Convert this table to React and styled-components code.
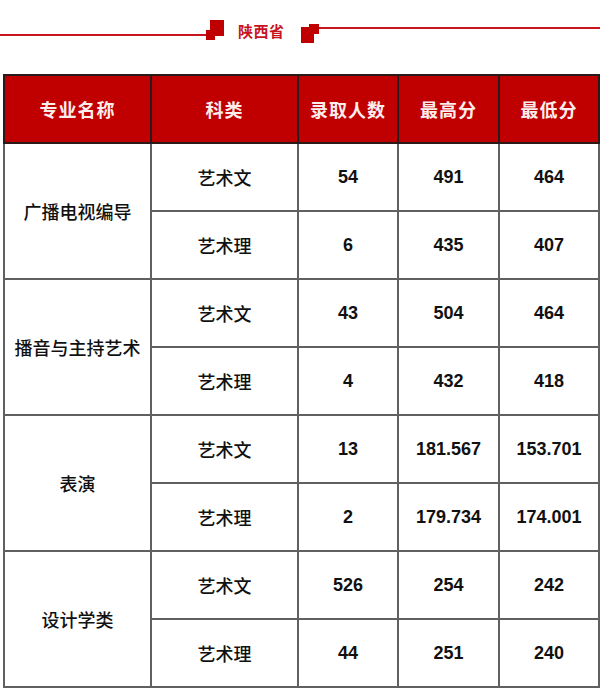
import React from 'react';
import styled, { createGlobalStyle } from 'styled-components';

const GlobalStyle = createGlobalStyle`
  body {
    margin: 0;
    background: #fff;
    font-family: "Liberation Sans", "Noto Sans CJK SC", sans-serif;
  }
`;

const Page = styled.div`
  width: 600px;
  height: 690px;
  overflow: hidden;
  background: #fff;
`;

const TitleBar = styled.div`
  display: flex;
  align-items: flex-start;
  height: 74px;
`;

const Line = styled.div`
  height: 2px;
  background: #c8141e;
  margin-top: ${props => props.top}px;
  width: ${props => props.width ? props.width + 'px' : 'auto'};
  flex: ${props => props.width ? 'none' : '1'};
`;

const Deco = styled.svg`
  flex: none;
  margin-top: ${props => props.top}px;
  fill: #c00000;
`;

const Title = styled.h2`
  margin: 21px 16px 0 14px;
  font-family: "Noto Sans CJK SC", sans-serif;
  font-size: 15px;
  font-weight: 700;
  color: #c8141e;
  line-height: 20px;
  letter-spacing: 0.5px;
`;

const Table = styled.table`
  margin-left: 3px;
  width: 595px;
  border-collapse: collapse;
  border: 2px solid #1a1a1a;
  table-layout: fixed;
`;

const Th = styled.th`
  height: 66px;
  background: #c00000;
  color: #fdeeee;
  font-family: "Noto Sans CJK SC", sans-serif;
  font-size: 18px;
  font-weight: 700;
  letter-spacing: 1px;
  border: 2px solid #2a1a1a;
  padding: 0;
`;

const Td = styled.td`
  height: 66px;
  border: 2px solid #606060;
  text-align: center;
  padding: 0;
  color: #111;
  font-size: 18px;
  font-weight: ${props => props.num ? 700 : 500};
  font-family: ${props => props.num
    ? '"Liberation Sans", Arial, sans-serif'
    : '"Noto Sans CJK SC", sans-serif'};
`;

const data = [
  { name: '广播电视编导', rows: [['艺术文', '54', '491', '464'], ['艺术理', '6', '435', '407']] },
  { name: '播音与主持艺术', rows: [['艺术文', '43', '504', '464'], ['艺术理', '4', '432', '418']] },
  { name: '表演', rows: [['艺术文', '13', '181.567', '153.701'], ['艺术理', '2', '179.734', '174.001']] },
  { name: '设计学类', rows: [['艺术文', '526', '254', '242'], ['艺术理', '44', '251', '240']] },
];

export default function App() {
  return (
    <Page>
      <GlobalStyle />
      <TitleBar>
        <Line top={34} width={206} />
        <Deco width="18" height="20" viewBox="0 0 18 20" top={20}>
          <rect x="0" y="10" width="9" height="10" />
          <rect x="4" y="0" width="14" height="16" />
        </Deco>
        <Title>陕西省</Title>
        <Deco width="18" height="19" viewBox="0 0 18 19" top={24}>
          <rect x="8" y="0" width="10" height="10" />
          <rect x="0" y="3" width="13" height="16" />
        </Deco>
        <Line top={27} />
      </TitleBar>
      <Table>
        <colgroup>
          <col style={{ width: 147 }} />
          <col style={{ width: 147 }} />
          <col style={{ width: 100 }} />
          <col style={{ width: 101 }} />
          <col style={{ width: 100 }} />
        </colgroup>
        <thead>
          <tr>
            <Th>专业名称</Th>
            <Th>科类</Th>
            <Th>录取人数</Th>
            <Th>最高分</Th>
            <Th>最低分</Th>
          </tr>
        </thead>
        <tbody>
          {data.map(group => group.rows.map((r, i) => (
            <tr key={group.name + i}>
              {i === 0 && <Td rowSpan={2}>{group.name}</Td>}
              <Td>{r[0]}</Td>
              <Td num>{r[1]}</Td>
              <Td num>{r[2]}</Td>
              <Td num>{r[3]}</Td>
            </tr>
          )))}
        </tbody>
      </Table>
    </Page>
  );
}
